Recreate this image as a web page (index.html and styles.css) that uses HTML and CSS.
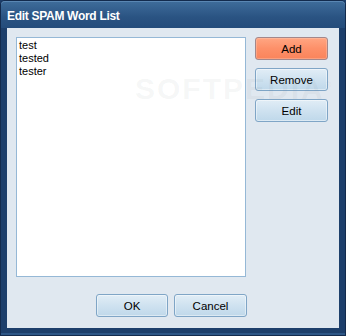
FILE: index.html
```html
<!DOCTYPE html>
<html>
<head>
<meta charset="utf-8">
<link rel="stylesheet" href="styles.css">
</head>
<body>
<div class="window">
  <div class="titlebar">Edit SPAM Word List</div>
  <div class="client">
    <div class="main">
      <div class="listbox">
        <div class="item">test</div>
        <div class="item">tested</div>
        <div class="item">tester</div>
      </div>
      <div class="side">
        <button class="btn btn-primary">Add</button>
        <button class="btn">Remove</button>
        <button class="btn">Edit</button>
      </div>
    </div>
    <div class="footer">
      <button class="btn">OK</button>
      <button class="btn">Cancel</button>
    </div>
    <div class="watermark">SOFTPEDIA<sup>®</sup></div>
  </div>
</div>
</body>
</html>
```
FILE: styles.css
```css
html, body {
  margin: 0;
  padding: 0;
  background: #1c3d69;
}
.window {
  width: 346px;
  height: 336px;
  box-sizing: border-box;
  display: flex;
  flex-direction: column;
  background: #1d3f6b;
  border: 1px solid #132b4d;
  border-radius: 5px 5px 0 0;
  box-shadow: inset 0 -2px 0 #2d5686;
  font-family: "Liberation Sans", Arial, sans-serif;
}
.titlebar {
  height: 27px;
  flex: none;
  box-sizing: border-box;
  padding: 8px 0 0 6px;
  color: #ffffff;
  font-weight: bold;
  font-size: 12px;
  letter-spacing: -0.3px;
  line-height: 14px;
  background: linear-gradient(#3f6d9b, #2a5382 60%, #244c7b);
  border-radius: 4px 4px 0 0;
  box-shadow: inset 0 1px 0 #5a87b3;
}
.client {
  position: relative;
  flex: 1;
  margin: 0 6px 7px 6px;
  background: #e0e8f0;
  padding: 9px 0 0 9px;
  display: flex;
  flex-direction: column;
}
.main {
  display: flex;
  gap: 9px;
}
.listbox {
  width: 230px;
  height: 240px;
  box-sizing: border-box;
  background: #ffffff;
  border: 1px solid #95b8d6;
  padding: 1px 2px;
  font-size: 11px;
  line-height: 13px;
  color: #000000;
}
.side {
  display: flex;
  flex-direction: column;
  gap: 8px;
}
.btn {
  width: 73px;
  height: 23px;
  box-sizing: border-box;
  margin: 0;
  padding: 0;
  font-family: "Liberation Sans", Arial, sans-serif;
  font-size: 11.5px;
  color: #000000;
  border: 1px solid #7fa5c6;
  border-radius: 3px;
  background: linear-gradient(#e1edf6, #cfe2f0 50%, #bfd8ea);
  box-shadow: inset 0 0 0 1px rgba(255,255,255,0.45);
}
.btn-primary {
  border-color: #a3878a;
  background: linear-gradient(#ffa683, #fd9069 50%, #fa845b);
  box-shadow: inset 0 0 0 1px rgba(255,210,190,0.35);
}
.footer {
  display: flex;
  gap: 6px;
  margin-top: 17px;
  padding-left: 80px;
}
.footer .btn {
  width: 72px;
}
.footer .btn + .btn {
  width: 73px;
}
.watermark {
  position: absolute;
  left: 128px;
  top: 44px;
  font-family: "Liberation Sans", Arial, sans-serif;
  font-weight: bold;
  font-size: 30px;
  letter-spacing: 2px;
  white-space: nowrap;
  color: rgba(120, 130, 140, 0.07);
  pointer-events: none;
}
.watermark sup {
  font-size: 9px;
}
```
